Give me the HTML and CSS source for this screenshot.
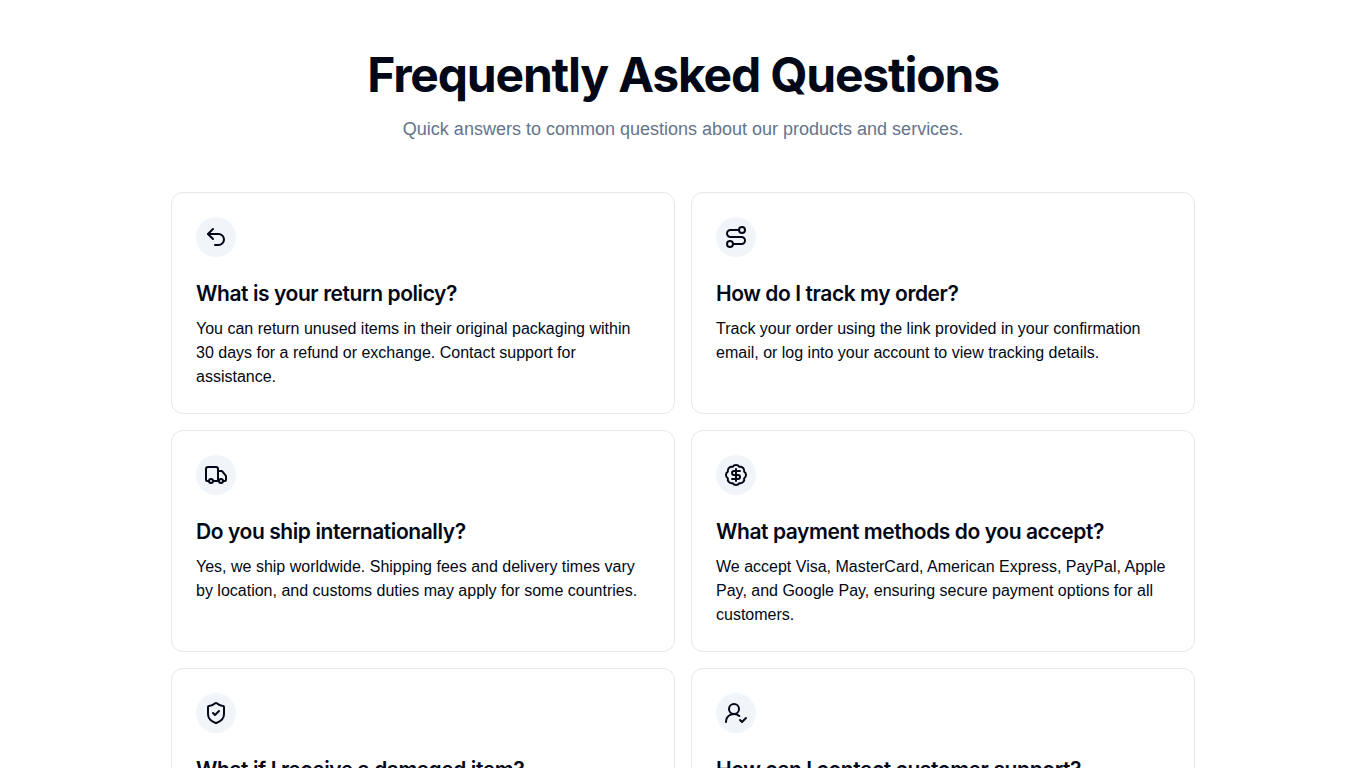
FILE: index.html
```html
<!DOCTYPE html>
<html lang="en">
<head>
    <meta charset="UTF-8">
    <meta name="viewport" content="width=device-width, initial-scale=1.0">
    <title>Frequently Asked Questions</title>
    <link rel="stylesheet" href="styles.css">
</head>
<body>

<main class="faq">
    <h1 class="faq-title">Frequently Asked Questions</h1>
    <p class="faq-subtitle">Quick answers to common questions about our products and services.</p>

    <div class="faq-grid">
        <section class="card">
            <div class="card-icon">
                <svg viewBox="0 0 24 24"><path d="M9 14 4 9l5-5"/><path d="M4 9h10.5a5.5 5.5 0 0 1 0 11H11"/></svg>
            </div>
            <h2 class="card-title">What is your return policy?</h2>
            <p class="card-text">You can return unused items in their original packaging within 30 days for a refund or exchange. Contact support for assistance.</p>
        </section>

        <section class="card">
            <div class="card-icon">
                <svg viewBox="0 0 24 24"><circle cx="6" cy="19" r="3"/><path d="M9 19h8.5a3.5 3.5 0 0 0 0-7h-11a3.5 3.5 0 0 1 0-7H15"/><circle cx="18" cy="5" r="3"/></svg>
            </div>
            <h2 class="card-title">How do I track my order?</h2>
            <p class="card-text">Track your order using the link provided in your confirmation email, or log into your account to view tracking details.</p>
        </section>

        <section class="card">
            <div class="card-icon">
                <svg viewBox="0 0 24 24"><path d="M14 18V6a2 2 0 0 0-2-2H4a2 2 0 0 0-2 2v11a1 1 0 0 0 1 1h2"/><path d="M15 18H9"/><path d="M19 18h2a1 1 0 0 0 1-1v-3.65a1 1 0 0 0-.22-.624l-3.48-4.35A1 1 0 0 0 17.52 8H14"/><circle cx="17" cy="18" r="2"/><circle cx="7" cy="18" r="2"/></svg>
            </div>
            <h2 class="card-title">Do you ship internationally?</h2>
            <p class="card-text">Yes, we ship worldwide. Shipping fees and delivery times vary by location, and customs duties may apply for some countries.</p>
        </section>

        <section class="card">
            <div class="card-icon">
                <svg viewBox="0 0 24 24"><path d="M3.85 8.62a4 4 0 0 1 4.78-4.77 4 4 0 0 1 6.74 0 4 4 0 0 1 4.78 4.78 4 4 0 0 1 0 6.74 4 4 0 0 1-4.77 4.78 4 4 0 0 1-6.75 0 4 4 0 0 1-4.78-4.77 4 4 0 0 1 0-6.76Z"/><path d="M16 8h-6a2 2 0 1 0 0 4h4a2 2 0 1 1 0 4H8"/><path d="M12 18V6"/></svg>
            </div>
            <h2 class="card-title">What payment methods do you accept?</h2>
            <p class="card-text">We accept Visa, MasterCard, American Express, PayPal, Apple Pay, and Google Pay, ensuring secure payment options for all customers.</p>
        </section>

        <section class="card">
            <div class="card-icon">
                <svg viewBox="0 0 24 24"><path d="M20 13c0 5-3.5 7.5-7.66 8.95a1 1 0 0 1-.67-.01C7.5 20.5 4 18 4 13V6a1 1 0 0 1 1-1c2 0 4.5-1.2 6.24-2.72a1.17 1.17 0 0 1 1.52 0C14.51 3.81 17 5 19 5a1 1 0 0 1 1 1z"/><path d="m9 12 2 2 4-4"/></svg>
            </div>
            <h2 class="card-title">What if I receive a damaged item?</h2>
        </section>

        <section class="card">
            <div class="card-icon">
                <svg viewBox="0 0 24 24"><path d="M2 21a8 8 0 0 1 13.292-6"/><circle cx="10" cy="8" r="5"/><path d="m16 19 2 2 4-4"/></svg>
            </div>
            <h2 class="card-title">How can I contact customer support?</h2>
        </section>
    </div>
</main>

</body>
</html>
```
FILE: styles.css
```css
* {
    box-sizing: border-box;
}

body {
    margin: 0;
    background-color: #fff;
    color: #020817;
    font-family: "Liberation Sans", Arial, sans-serif;
}

.faq {
    max-width: 1024px;
    margin: 0 auto;
    padding: 51px 0 48px;
}

.faq-title {
    margin: 0;
    font-family: Inter, sans-serif;
    font-size: 48px;
    line-height: 48px;
    font-weight: 700;
    letter-spacing: -0.025em;
    text-align: center;
}

.faq-subtitle {
    margin: 16px 0 0;
    color: #64748b;
    font-size: 18px;
    line-height: 28px;
    text-align: center;
}

.faq-grid {
    display: grid;
    grid-template-columns: 1fr 1fr;
    gap: 16px;
    margin-top: 49px;
}

.card {
    min-height: 222px;
    padding: 24px;
    border: 1px solid #e5e7eb;
    border-radius: 12px;
}

.card-icon {
    display: flex;
    align-items: center;
    justify-content: center;
    width: 40px;
    height: 40px;
    margin-bottom: 24px;
    border-radius: 50%;
    background-color: #f1f5f9;
}

.card-icon svg {
    width: 24px;
    height: 24px;
    fill: none;
    stroke: currentColor;
    stroke-width: 2;
    stroke-linecap: round;
    stroke-linejoin: round;
}

.card-title {
    margin: 0 0 10px;
    font-family: Inter, sans-serif;
    font-size: 21px;
    line-height: 26px;
    font-weight: 600;
    letter-spacing: -0.02em;
}

.card-text {
    margin: 0;
    font-size: 16px;
    line-height: 24px;
}
```
